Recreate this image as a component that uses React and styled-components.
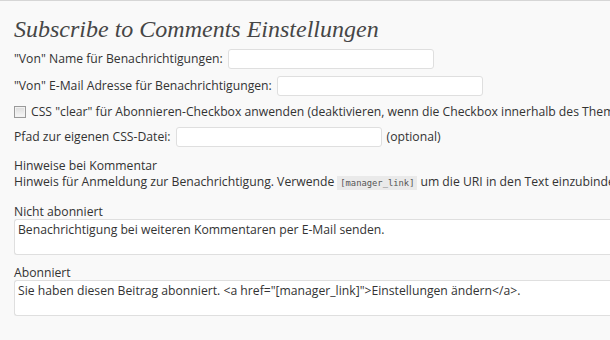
import React from "react";
import styled, { createGlobalStyle } from "styled-components";

const Global = createGlobalStyle`
  html, body { margin: 0; padding: 0; background: #f9f9f9; }
  body { width: 610px; height: 340px; overflow: hidden; }
`;

const Page = styled.div`
  box-sizing: border-box;
  width: 610px;
  height: 340px;
  overflow: hidden;
  border-top: 1px solid #d6d6d6;
  background: #f9f9f9;
  padding: 14px 0 0 14px;
  font-family: "Open Sans", "DejaVu Sans", sans-serif;
  font-size: 12.2px;
  color: #333;
`;

const Title = styled.h2`
  margin: 0 0 5px;
  font-family: "Liberation Serif", "Times New Roman", serif;
  font-style: italic;
  font-weight: normal;
  font-size: 24px;
  line-height: 29px;
  color: #464646;
  white-space: nowrap;
`;

const Row = styled.div`
  display: flex;
  align-items: center;
  gap: ${(p) => p.gap || 5}px;
  height: ${(p) => p.h || 20}px;
  margin-bottom: ${(p) => p.mb ?? 7}px;
  white-space: nowrap;
`;

const Label = styled.span`
  line-height: 16px;
`;

const TextInput = styled.input`
  box-sizing: border-box;
  width: 206px;
  height: 20px;
  border: 1px solid #dfdfdf;
  border-radius: 3px;
  background: #fff;
  padding: 0 4px;
  font: inherit;
  outline: none;
`;

const Check = styled.input`
  appearance: none;
  -webkit-appearance: none;
  box-sizing: border-box;
  width: 12px;
  height: 12px;
  margin: 0;
  border: 1px solid #9a9a9a;
  background: linear-gradient(#dcdcdc, #f8f8f8);
  box-shadow: inset 0 0 0 1px #f2f2f2;
  flex: none;
`;

const Section = styled.div`
  margin-top: ${(p) => p.mt || 0}px;
  line-height: 16px;
  white-space: nowrap;
`;

const Code = styled.code`
  font-family: "DejaVu Sans Mono", "Liberation Mono", monospace;
  font-size: 8.8px;
  background: #eaeaea;
  color: #555;
  padding: 2px 3px;
  margin: 0 3px;
`;

const FieldLabel = styled.div`
  margin-top: ${(p) => p.mt || 0}px;
  line-height: 15px;
  white-space: nowrap;
`;

const Area = styled.div`
  box-sizing: border-box;
  width: 610px;
  height: 36px;
  margin-top: 0;
  border: 1px solid #dfdfdf;
  border-right: none;
  border-radius: 3px 0 0 3px;
  background: #fff;
  padding: 2px 3px;
  line-height: 16px;
  white-space: nowrap;
  color: #333;
`;

export default function App() {
  return (
    <>
      <Global />
      <Page>
        <Title>Subscribe to Comments Einstellungen</Title>
        <Row>
          <Label>"Von" Name für Benachrichtigungen:</Label>
          <TextInput type="text" />
        </Row>
        <Row>
          <Label>"Von" E-Mail Adresse für Benachrichtigungen:</Label>
          <TextInput type="text" />
        </Row>
        <Row h={18} mb={6} gap={5}>
          <Check type="checkbox" />
          <Label>
            CSS "clear" für Abonnieren-Checkbox anwenden (deaktivieren, wenn die Checkbox innerhalb des Themes positioniert wird)
          </Label>
        </Row>
        <Row>
          <Label>Pfad zur eigenen CSS-Datei:</Label>
          <TextInput type="text" />
          <Label>(optional)</Label>
        </Row>
        <Section mt={11}>
          Hinweise bei Kommentar
          <br />
          Hinweis für Anmeldung zur Benachrichtigung. Verwende
          <Code>[manager_link]</Code>
          um die URI in den Text einzubinden.
        </Section>
        <FieldLabel mt={13}>Nicht abonniert</FieldLabel>
        <Area>Benachrichtigung bei weiteren Kommentaren per E-Mail senden.</Area>
        <FieldLabel mt={10}>Abonniert</FieldLabel>
        <Area>
          Sie haben diesen Beitrag abonniert. &lt;a href="[manager_link]"&gt;Einstellungen ändern&lt;/a&gt;.
        </Area>
      </Page>
    </>
  );
}
